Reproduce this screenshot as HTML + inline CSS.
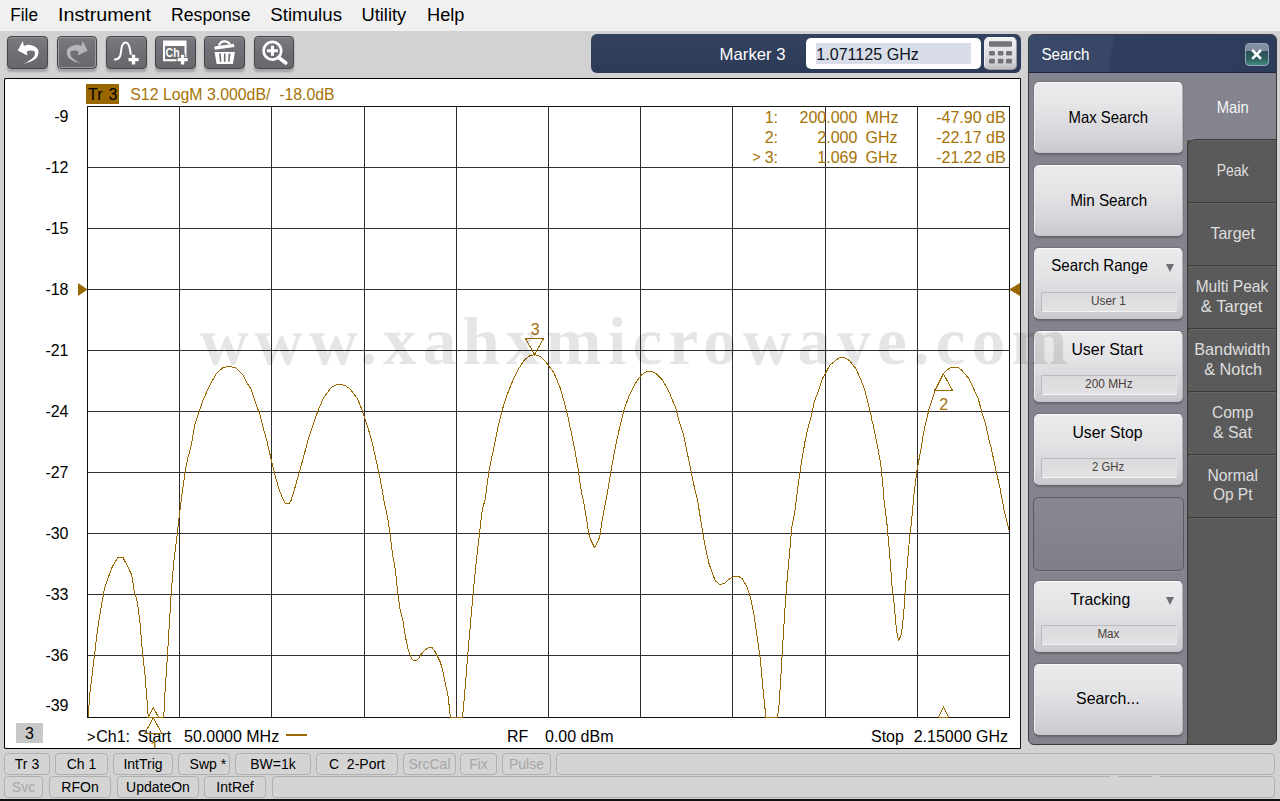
<!DOCTYPE html>
<html>
<head>
<meta charset="utf-8">
<title>Network Analyzer</title>
<style>
*{box-sizing:border-box;margin:0;padding:0}
html,body{width:1280px;height:801px;overflow:hidden}
body{position:relative;background:#d2d2d2;font-family:"Liberation Sans",sans-serif;color:#000}
.abs{position:absolute}
#menubar{position:absolute;left:0;top:0;width:1280px;height:31px;background:#f0f0f0}
.tb{position:absolute;top:36px;width:40.75px;height:33px;border-radius:4px;border:1px solid #46464a;
 background:linear-gradient(#7a7a80,#6e6e74 50%,#67676c);box-shadow:0 3px 2px rgba(120,120,125,.5), inset 0 1px 0 rgba(255,255,255,.16)}
.tb svg{position:absolute;left:-1px;top:-1px}
.tb.dis{box-shadow:0 3px 2px rgba(120,120,125,.5), inset 0 0 0 1px #9c9ca0}
#mbar{position:absolute;left:591px;top:34px;width:430px;height:39px;border-radius:6px;background:linear-gradient(#33425f,#2c3a58)}
#mbar .inp{position:absolute;left:215px;top:4px;width:175px;height:31px;border-radius:5px;background:#fff}
#mbar .sel{position:absolute;left:10px;top:5px;width:155px;height:21px;background:#d8dde8}
#mbar .kp{position:absolute;left:393px;top:3px;width:33px;height:33px;border-radius:5px;border:1px solid #9c9ca2;border-top-color:#fbfbfc;border-left-color:#ededf0;background:linear-gradient(#f1f1f3,#e2e2e5 45%,#d2d2d6 80%,#bcbcc1)}
#plot{position:absolute;left:4px;top:78px;width:1017px;height:671px;background:#fff;border:1px solid #000;border-right-color:#1c1c10;border-radius:2px 0 0 2px}
.sb{position:absolute;height:22px;border:1px solid #b0b0b0;border-radius:4px;background:#d4d4d4;font-size:14px;line-height:20px;text-align:center;color:#000;white-space:nowrap}
.sb.dis{color:#a6a6a6}
.r1{top:753px}.r2{top:776px}
#side{position:absolute;left:1028px;top:34px;width:249px;height:711px;border-radius:6px;background:#5a5a5a;overflow:hidden;border:1px solid #3a3a3e}
#side .hdr{position:absolute;left:0;top:0;width:249px;height:38px;background:linear-gradient(100deg,#3a4969 0,#384766 33%,#2f3e5e 34%,#2e3c5b 100%);border-bottom:1px solid #1d2740}
#side .x{position:absolute;left:216px;top:8px;width:24px;height:23px;border-radius:4px;border:1px solid #97a2b2;background:linear-gradient(#8491a5 0,#7e8ba0 32%,#2a4f56 33%,#2f5f62 70%,#3f8a80 100%)}
#side .body{position:absolute;left:-1px;top:38px;width:160px;height:673px;background:#84848e;border-right:1px solid #4b4a38;border-bottom:1px solid #4b4a38;border-radius:0 0 5px 5px}
#side .maintab{position:absolute;left:158px;top:38px;width:91px;height:67px;background:#84848e}
.tab{position:absolute;left:158px;width:91px;height:64px;background:#5a5a5a;border:1px solid #3b3a33;border-right:none;border-top-left-radius:3px;box-shadow:inset 0 1px 0 #666}
.key{position:absolute;left:1034px;width:149px;height:71px;border-radius:5px;border:1px solid #b4b4ba;border-top-color:#fafafb;border-left-color:#ededf0;border-bottom-color:#c2c2c7;
 background:linear-gradient(#ececef,#e3e3e6 40%,#d6d6da 75%,#c9c9ce);box-shadow:0 1px 0 #66666e,0 2px 0 rgba(102,102,110,.65),0 3px 1px rgba(102,102,110,.3),0 -1px 0 rgba(98,98,106,.5),-1px 0 0 rgba(104,104,114,.35),1px 0 0 rgba(104,104,114,.35)}
.key .vb{position:absolute;left:6px;top:43px;width:136px;height:20px;border:1px solid #b9b9be;border-bottom-color:#f4f4f5;border-right-color:#e4e4e6;background:linear-gradient(#dadadd,#e2e2e5);border-radius:2px}
.key .dd{position:absolute;left:131px;top:15px;width:0;height:0;border-left:4px solid transparent;border-right:4px solid transparent;border-top:8px solid #6e6e73}
.key.blank{left:1033px;width:151px;height:74px;background:linear-gradient(#888892,#7f7f89);border:1px solid #5a5a63;box-shadow:0 1px 0 rgba(165,165,175,.45)}
#wm{position:absolute;left:0;top:0;pointer-events:none}
</style>
</head>
<body>
<div id="menubar"></div>
<div class="tb" style="left:7.25px"><svg width="41" height="33" viewBox="0 0 41 33"><path fill="#fff" d="M10.7 14.4L15.75 5L16.9 9.9C19 9 21 8.7 22.8 8.9C25 9.2 27 9.8 28.25 10.8C30 12 31.2 13.5 31.4 15.1C31.6 17 31.3 18.8 30.6 20.2C29.8 21.8 28.5 23 26.7 24.1C24.5 25.5 22 26.5 16.5 27.9C19 26.8 20 26.2 21.2 25.3C23.5 24 25 23 25.9 21.8C27 20.5 27.8 19.2 27.9 17.9C28 16.5 27.7 15.6 27.1 15.1C26.3 14.5 25 14.3 23.6 14.4C22.3 14.5 21 14.8 19.7 15.5L20.4 19.4Z"/></svg></div>
<div class="tb dis" style="left:56.5px"><svg width="41" height="33" viewBox="0 0 41 33"><g transform="translate(41.3 0) scale(-1 1)"><path fill="#b6b6b9" d="M10.7 14.4L15.75 5L16.9 9.9C19 9 21 8.7 22.8 8.9C25 9.2 27 9.8 28.25 10.8C30 12 31.2 13.5 31.4 15.1C31.6 17 31.3 18.8 30.6 20.2C29.8 21.8 28.5 23 26.7 24.1C24.5 25.5 22 26.5 16.5 27.9C19 26.8 20 26.2 21.2 25.3C23.5 24 25 23 25.9 21.8C27 20.5 27.8 19.2 27.9 17.9C28 16.5 27.7 15.6 27.1 15.1C26.3 14.5 25 14.3 23.6 14.4C22.3 14.5 21 14.8 19.7 15.5L20.4 19.4Z"/></g></svg></div>
<div class="tb" style="left:105.75px"><svg width="41" height="33" viewBox="0 0 41 33"><path fill="none" stroke="#fff" stroke-width="2" stroke-linecap="round" d="M8.8 23.5C11 23.5 12.6 23 14 20.2C15 18 15 16 15.3 13.5C15.7 10.5 16.3 6.6 19.6 6.6C22.8 6.6 23.5 10.5 24 13.5C24.3 15.5 24.5 17 24.8 18"/><path fill="#fff" d="M25.8 18.7h3.4v3.2h3.4v3.3h-3.4v3.3h-3.4v-3.3h-3.3v-3.3h3.3z"/></svg></div>
<div class="tb" style="left:155px"><svg width="41" height="33" viewBox="0 0 41 33"><path fill="#fff" fill-rule="evenodd" d="M8 4.6H31.5V25.3H8ZM10 10V23.3H29.5V10Z"/><text x="10.6" y="21" font-family="Liberation Sans, sans-serif" font-weight="bold" font-size="12.6" fill="#fff" textLength="14" lengthAdjust="spacingAndGlyphs">Ch</text><path fill="#fff" stroke="#6b6b70" stroke-width="2" paint-order="stroke" d="M25.9 18.7h3.4v3.2h3.4v3.3h-3.4v3.3h-3.4v-3.3h-3.3v-3.3h3.3z"/></svg></div>
<div class="tb" style="left:204.25px"><svg width="41" height="33" viewBox="0 0 41 33"><path fill="#fff" fill-rule="evenodd" d="M10.6 15.9H30.9L28.9 28H12.6ZM15.1 17.6L15.9 25.8H17.4L16.9 17.6ZM19.9 17.6V25.8H21.5V17.6ZM24.6 17.6L24.1 25.8H25.6L26.4 17.6Z"/><path fill="#fff" d="M10.3 10.6L29.9 7.8L30.4 10.9L10.8 13.7Z"/><path fill="none" stroke="#fff" stroke-width="2.2" d="M14.9 9.6C16 6.5 18.5 5.2 20.5 5.3C23 5.4 25 6.5 25.8 8"/></svg></div>
<div class="tb" style="left:253.5px"><svg width="41" height="33" viewBox="0 0 41 33"><circle cx="18.4" cy="14.75" r="8.8" fill="none" stroke="#fff" stroke-width="2.7"/><path fill="#fff" d="M16.9 9.7h3.1v3.5h3.9v3.1h-3.9v3.5h-3.1v-3.5h-4v-3.1h4z"/><path stroke="#fff" stroke-width="3.6" stroke-linecap="round" d="M25 21.8L31.8 27"/></svg></div>

<div id="mbar"><div class="inp"><div class="sel"></div></div><div class="kp"><svg width="31" height="30" viewBox="0 0 31 30"><g fill="#747478"><rect x="4" y="3.3" width="23" height="5.4" rx="1"/><rect x="4" y="12.9" width="5.9" height="4.6" rx="1.2"/><rect x="12.9" y="12.9" width="5.5" height="4.6" rx="1.2"/><rect x="21" y="12.9" width="6" height="4.6" rx="1.2"/><rect x="4" y="20.8" width="5.9" height="4.7" rx="1.2"/><rect x="12.9" y="20.8" width="5.5" height="4.7" rx="1.2"/><rect x="21" y="20.8" width="6" height="4.7" rx="1.2"/></g></svg></div></div>
<div id="plot"></div>
<svg id="plotsvg" class="abs" style="left:0;top:0" width="1280" height="801" viewBox="0 0 1280 801" font-family="Liberation Sans, sans-serif" font-size="16">
<defs><clipPath id="pc"><rect x="5" y="79" width="1015" height="669"/></clipPath></defs><g clip-path="url(#pc)">
<path d="M179.5 106V718M271.5 106V718M364.5 106V718M456.5 106V718M548.5 106V718M640.5 106V718M732.5 106V718M825.5 106V718M917.5 106V718M87 167.5H1010M87 228.5H1010M87 289.5H1010M87 350.5H1010M87 411.5H1010M87 472.5H1010M87 533.5H1010M87 594.5H1010M87 655.5H1010" stroke="#2e2e2e" stroke-width="1" fill="none" shape-rendering="crispEdges"/>
<rect x="87.5" y="106.5" width="922" height="611" stroke="#111" stroke-width="1" fill="none" shape-rendering="crispEdges"/>
<rect x="86" y="84" width="33" height="20" fill="#9a6600"/>
<text x="88" y="99.5" fill="#000">Tr</text><text x="108.6" y="99.5" fill="#000">3</text>
<text x="130.3" y="99.5" fill="#a57206" xml:space="preserve" textLength="204.4" lengthAdjust="spacingAndGlyphs">S12 LogM 3.000dB/  -18.0dB</text>
<text x="68.5" y="122" text-anchor="end" fill="#000">-9</text>
<text x="68.5" y="173" text-anchor="end" fill="#000">-12</text>
<text x="68.5" y="234" text-anchor="end" fill="#000">-15</text>
<text x="68.5" y="295" text-anchor="end" fill="#000">-18</text>
<text x="68.5" y="356" text-anchor="end" fill="#000">-21</text>
<text x="68.5" y="417" text-anchor="end" fill="#000">-24</text>
<text x="68.5" y="478" text-anchor="end" fill="#000">-27</text>
<text x="68.5" y="539" text-anchor="end" fill="#000">-30</text>
<text x="68.5" y="600" text-anchor="end" fill="#000">-33</text>
<text x="68.5" y="661" text-anchor="end" fill="#000">-36</text>
<text x="68.5" y="710.5" text-anchor="end" fill="#000">-39</text>
<path d="M78 283V296L87.5 289.5Z" fill="#9a6600"/>
<path d="M1020 283V296L1009 289.5Z" fill="#9a6600"/>
<g fill="#a57206"><text x="778" y="122.6" text-anchor="end">1:</text><text x="857.4" y="122.6" text-anchor="end">200.000</text><text x="865.5" y="122.6">MHz</text><text x="1005.6" y="122.6" text-anchor="end">-47.90 dB</text></g>
<g fill="#a57206"><text x="778" y="142.6" text-anchor="end">2:</text><text x="857.4" y="142.6" text-anchor="end">2.000</text><text x="865.5" y="142.6">GHz</text><text x="1005.6" y="142.6" text-anchor="end">-22.17 dB</text></g>
<g fill="#a57206"><text x="778" y="162.6" text-anchor="end">3:</text><text x="857.4" y="162.6" text-anchor="end">1.069</text><text x="865.5" y="162.6">GHz</text><text x="1005.6" y="162.6" text-anchor="end">-21.22 dB</text></g>
<text x="752.4" y="162.4" font-size="14" fill="#a57206">&gt;</text>
<polyline points="88,717.5 90,692.5 94.5,655 97.5,630 101.25,606.25 104.5,588.75 108.75,576.25 112.5,566.25 117.5,558 120,557 123,557.5 127.5,566.25 131.75,575 134.25,591.25 137.5,602.5 140,622.5 142.5,652.5 145,675 147,700 148.25,717.5 163.75,717.5 165,692.5 167.5,655 169.25,625 171.25,592.5 173.75,562.5 177.5,532.5 178.75,520 181.25,500 185,472.5 188,457.5 191.25,445 195,423.75 199.25,411.25 202.5,401.25 209.25,386.25 216.25,373.75 222.5,368 229.25,366.25 236.25,368 242.5,374.25 247.5,383.75 251.25,389.5 255.5,402.5 260,415 263.75,430 267,441.25 271.25,460 275,475 278.75,488.75 283,499 285.2,503 289,503.5 291,500.5 295,487.5 299.25,472.5 303.75,456.25 308.75,437.5 313.75,422.5 318.75,408.75 323.75,397.5 331.25,387.5 336.25,385 340,384.25 345,385.5 350,388.75 357.5,398.75 362.5,411.25 366.25,422.5 371.25,438.75 375,455 378.75,472.5 380.4,480 384,501 387.6,517.5 390,534 392.4,553.4 395.4,570 397.5,590.9 399.9,608.8 402.8,620 404.3,630 406.3,641 408.3,650 410.3,656 412.3,659.5 414.3,660.5 416.8,660 418.8,658.5 420.3,655.5 422.8,652.5 425.3,650 428.3,647.5 430.3,647.2 432.3,647.8 434.8,651 437.3,656 440.3,662 442.3,669 444.3,678 446.3,688 448.3,697 449.9,713.7 450.8,717.5 462.5,717.5 463.4,707.7 465.5,683.7 467.3,659.8 469.4,635.8 471.5,611.8 473.3,590.9 475.4,569.9 477.7,548.9 479.8,530.9 482.2,510 485,500 488.75,472.5 491.25,460 495,442.5 498.75,423.75 503,407.5 507.5,393.75 512.5,381.25 518.75,368.75 523.75,360.75 528.75,356.25 534.25,354.5 540,356.25 546.25,362.5 553.75,372.5 560,387.5 563.75,400 567.5,415 571.25,432.5 575,451.25 578.75,472.5 579.6,480 581.6,493 584.1,504 586.2,517 588.6,533 590.2,539 594.6,547.7 598.6,540 600.2,534 602.2,520 604.6,507 607.2,494 609.6,480 610.4,475 612.5,462.5 616.25,442.5 620,426.25 624.25,408.75 630,393.75 635,383.75 641.25,375 646.25,371.75 651.25,371.25 656.25,373.75 662.5,380 668.75,391.25 675.5,407.5 679.5,422.5 683.4,433.8 687,451.8 690.8,469.7 693.8,484.7 697.4,499.7 701.9,527 704.9,544.9 708.8,562.9 712.4,573.4 715.4,580.9 719.9,584.5 724.4,583.3 728.9,579.4 733.4,576.7 738.5,576.4 742.4,578.8 746.9,586.9 750.4,597.3 754.3,616.8 757.3,637.8 760.3,658.7 762.7,685.7 764.8,706.7 766,717.5 777.4,717.5 778.9,706.7 780.7,679.7 782.8,643.8 785.2,604.8 787.3,577.9 789.4,555 791.8,527 794.8,511.7 797.8,487.7 800.8,466.7 805.3,439.8 808.5,426 810.3,420 812.3,411.5 813.8,404 815.3,399 817.8,393 820.3,385 822.8,378 825.8,373 828.3,368 830.3,364.5 833.3,362.5 835.3,360.5 838.3,358.5 840.3,357.5 844.3,357.5 847.3,359 850.3,361.5 852.3,364.5 855.8,368.5 857.8,373 860.3,378.5 863.3,386 865.3,392 867.3,400 869.3,408 870.8,414 871.8,420 873.2,424.8 877.1,444.3 880.7,463.8 883.1,487.7 884,500 886.7,521 889.1,547.9 890.9,570 891.4,579.5 892.4,590 893.4,597 894.4,607 895.4,619 896.4,629 897.4,636 898.7,640.7 900.4,636.5 901.4,634 902.4,626 903.4,616 904.4,604 905.1,591 906.2,578 907,568 909.5,538.9 911.6,521 914,493.7 917,469.7 920.9,450 922.8,437.4 925.3,425 927.2,417.4 929,408.7 932.1,400 935.3,390 939.6,381.2 943.4,373.7 946.5,370.6 950.9,367.2 957.7,367.2 961.5,370 965.2,374.3 969,378.7 972.1,385 975.2,392.4 978.3,398.7 980.2,406.2 982.1,413.7 985.2,422.4 987.1,431.1 989.6,442.4 991.4,448.6 995.4,468.2 999.9,487.7 1004.4,511.7 1008.9,529.6" fill="none" stroke="#9a6600" stroke-width="1" stroke-linejoin="round" shape-rendering="crispEdges"/>
<rect x="16" y="723" width="27" height="20" fill="#c8c8c8"/>
<text x="29.5" y="738.8" text-anchor="middle" fill="#000">3</text>
<text x="87" y="741.5" fill="#000" font-size="14.5">&gt;</text><text x="96.2" y="741.6" fill="#000">Ch1:</text>
<text x="137.5" y="741.6" fill="#000">Start</text>
<text x="184" y="741.6" fill="#000">50.0000 MHz</text>
<rect x="286" y="734" width="21" height="2" fill="#9a6600"/>
<text x="507" y="741.6" fill="#000">RF</text>
<text x="545" y="741.6" fill="#000">0.00 dBm</text>
<text x="871" y="741.6" fill="#000">Stop</text>
<text x="1008" y="741.6" text-anchor="end" fill="#000">2.15000 GHz</text>
<g fill="none" stroke="#9a6600" stroke-width="1" shape-rendering="crispEdges">
<path d="M525.5 338.5H543.5L534.5 354.5Z"/>
<path d="M943.5 374L934.5 390.5H952.5Z"/>
<path d="M153.3 707.5L148 717.5H158.6Z"/>
<path d="M943.5 707L938.3 717.5H948.8Z"/>
<path d="M153.3 718L144.7 733.5H162Z"/>
</g>
<text x="535.3" y="334.8" text-anchor="middle" fill="#a57206">3</text>
<text x="943.6" y="410" text-anchor="middle" fill="#a57206">2</text>
<text x="154.5" y="753" text-anchor="middle" fill="#a57206">1</text>
</g></svg>
<div id="side">
 <div class="hdr"><div class="x"><svg width="22" height="21" viewBox="0 0 22 21" style="position:absolute;left:0;top:0"><path d="M6.2 6L15 14.8M15 6L6.2 14.8" stroke="#fff" stroke-width="2.6"/></svg></div></div>
 <div class="body"></div><div class="maintab"></div>
 <div class="tab" style="top:104px;border-top-left-radius:9px"></div><div class="tab" style="top:167px"></div><div class="tab" style="top:230px"></div><div class="tab" style="top:293px"></div><div class="tab" style="top:356px"></div><div class="tab" style="top:419px"></div><div class="tab" style="top:482px;height:232px"></div>
</div>
<div class="key" style="top:82px"></div><div class="key" style="top:165px"></div><div class="key" style="top:248px"><div class="dd"></div><div class="vb"></div></div><div class="key" style="top:331px"><div class="vb"></div></div><div class="key" style="top:414px"><div class="vb"></div></div><div class="key blank" style="top:497px"></div><div class="key" style="top:581px"><div class="dd"></div><div class="vb"></div></div><div class="key" style="top:664px"></div>
<div class="sb r1" style="left:4px;width:46px">Tr 3</div>
<div class="sb r1" style="left:55px;width:53px">Ch 1</div>
<div class="sb r1" style="left:113px;width:60px">IntTrig</div>
<div class="sb r1" style="left:178px;width:52px">&nbsp;&nbsp;Swp *</div>
<div class="sb r1" style="left:235px;width:76px">BW=1k</div>
<div class="sb r1" style="left:316px;width:82px">C&nbsp; 2-Port</div>
<div class="sb r1 dis" style="left:403px;width:53px">SrcCal</div>
<div class="sb r1 dis" style="left:460px;width:37px">Fix</div>
<div class="sb r1 dis" style="left:502px;width:49px">Pulse</div>
<div class="sb r1" style="left:556px;width:719px"></div>
<div class="sb r2 dis" style="left:4px;width:39px">Svc</div>
<div class="sb r2" style="left:49px;width:62px">RFOn</div>
<div class="sb r2" style="left:117px;width:82px">UpdateOn</div>
<div class="sb r2" style="left:204px;width:62px">IntRef</div>
<div class="sb r2" style="left:272px;width:1003px"></div>

<div class="abs" style="left:1110px;top:776px;width:8px;height:2px;background:#d2d2d2"></div><div class="abs" style="left:1152px;top:776px;width:8px;height:2px;background:#d2d2d2"></div><div class="abs" style="left:0;top:799px;width:1280px;height:2px;background:#101010"></div>
<svg id="uitext" class="abs" style="left:0;top:0" width="1280" height="801" viewBox="0 0 1280 801" font-family="Liberation Sans, sans-serif">
<text x="10.25" y="21.3" font-size="18" fill="#000" textLength="27.7" lengthAdjust="spacingAndGlyphs">File</text>
<text x="58" y="21.3" font-size="18" fill="#000" textLength="92.99" lengthAdjust="spacingAndGlyphs">Instrument</text>
<text x="171" y="21.3" font-size="18" fill="#000" textLength="79.49" lengthAdjust="spacingAndGlyphs">Response</text>
<text x="270.25" y="21.3" font-size="18" fill="#000" textLength="71.74" lengthAdjust="spacingAndGlyphs">Stimulus</text>
<text x="361.5" y="21.3" font-size="18" fill="#000" textLength="44.74" lengthAdjust="spacingAndGlyphs">Utility</text>
<text x="427" y="21.3" font-size="18" fill="#000" textLength="37.47" lengthAdjust="spacingAndGlyphs">Help</text>
<text x="719.6" y="59.8" font-size="16.5" fill="#fff" textLength="65.98" lengthAdjust="spacingAndGlyphs">Marker 3</text>
<text x="816.3" y="59.8" font-size="16.5" fill="#0c1426" textLength="102.49" lengthAdjust="spacingAndGlyphs">1.071125 GHz</text>
<text x="1041.4" y="60" font-size="16.5" fill="#fff" textLength="47.99" lengthAdjust="spacingAndGlyphs">Search</text>
<text x="1068.5" y="122.8" font-size="16.5" fill="#000" textLength="79.51" lengthAdjust="spacingAndGlyphs">Max Search</text>
<text x="1070.2" y="205.6" font-size="16.5" fill="#000" textLength="77" lengthAdjust="spacingAndGlyphs">Min Search</text>
<text x="1051.3" y="271.4" font-size="16.5" fill="#000" textLength="96.49" lengthAdjust="spacingAndGlyphs">Search Range</text>
<text x="1071.4" y="354.7" font-size="16.5" fill="#000" textLength="71.5" lengthAdjust="spacingAndGlyphs">User Start</text>
<text x="1072.5" y="437.5" font-size="16.5" fill="#000" textLength="69.99" lengthAdjust="spacingAndGlyphs">User Stop</text>
<text x="1070.2" y="604.7" font-size="16.5" fill="#000" textLength="60" lengthAdjust="spacingAndGlyphs">Tracking</text>
<text x="1076.1" y="704" font-size="16.5" fill="#000" textLength="63.51" lengthAdjust="spacingAndGlyphs">Search...</text>
<text x="1091" y="305" font-size="12" fill="#4a4038" textLength="34.97" lengthAdjust="spacingAndGlyphs">User 1</text>
<text x="1085.1" y="388" font-size="12" fill="#4a4038" textLength="47.5" lengthAdjust="spacingAndGlyphs">200 MHz</text>
<text x="1092.1" y="471" font-size="12" fill="#4a4038" textLength="32.02" lengthAdjust="spacingAndGlyphs">2 GHz</text>
<text x="1097.4" y="638" font-size="12" fill="#4a4038" textLength="22.06" lengthAdjust="spacingAndGlyphs">Max</text>
<text x="1216.65" y="113" font-size="16.5" fill="#f6f6f6" textLength="32" lengthAdjust="spacingAndGlyphs">Main</text>
<text x="1216.65" y="175.5" font-size="16.5" fill="#dedede" textLength="32" lengthAdjust="spacingAndGlyphs">Peak</text>
<text x="1210.4" y="238.75" font-size="16.5" fill="#dedede" textLength="44.53" lengthAdjust="spacingAndGlyphs">Target</text>
<text x="1195.7" y="292" font-size="16.5" fill="#dedede" textLength="72.49" lengthAdjust="spacingAndGlyphs">Multi Peak</text>
<text x="1200.8" y="311.6" font-size="16.5" fill="#dedede" textLength="61.52" lengthAdjust="spacingAndGlyphs">&amp; Target</text>
<text x="1194.2" y="355" font-size="16.5" fill="#dedede" textLength="76" lengthAdjust="spacingAndGlyphs">Bandwidth</text>
<text x="1204.2" y="374.6" font-size="16.5" fill="#dedede" textLength="57.99" lengthAdjust="spacingAndGlyphs">&amp; Notch</text>
<text x="1211.9" y="417.7" font-size="16.5" fill="#dedede" textLength="41.5" lengthAdjust="spacingAndGlyphs">Comp</text>
<text x="1212.9" y="437.6" font-size="16.5" fill="#dedede" textLength="39.02" lengthAdjust="spacingAndGlyphs">&amp; Sat</text>
<text x="1207.5" y="480.8" font-size="16.5" fill="#dedede" textLength="50.5" lengthAdjust="spacingAndGlyphs">Normal</text>
<text x="1212.9" y="500.3" font-size="16.5" fill="#dedede" textLength="39.54" lengthAdjust="spacingAndGlyphs">Op Pt</text>
</svg>
<svg id="wm" width="1280" height="801" viewBox="0 0 1280 801"><text x="200" y="363.8" font-family="Liberation Serif, serif" font-weight="bold" font-size="67" textLength="867.3" lengthAdjust="spacing" fill="#000" fill-opacity="0.1">www.xahxmicrowave.com</text></svg>

</body>
</html>
